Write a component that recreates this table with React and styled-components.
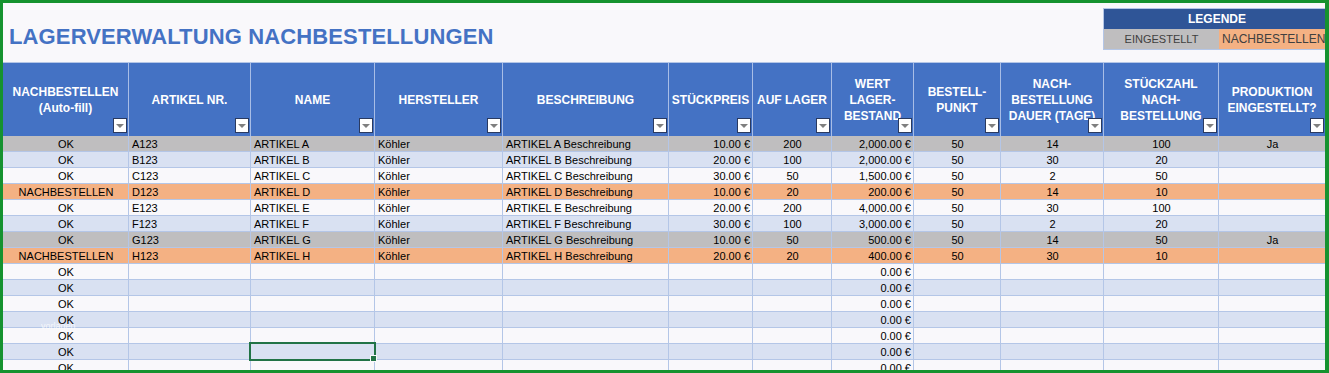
import React from 'react';
import styled, { createGlobalStyle } from 'styled-components';

const GlobalStyle = createGlobalStyle`
  body {
    margin: 0;
    background: #ffffff;
  }
`;

const Frame = styled.div`
  position: relative;
  width: 1329px;
  height: 373px;
  box-sizing: border-box;
  border: 3px solid #15922f;
  border-right-width: 4px;
  background: #f9f8fb;
  overflow: hidden;
  font-family: "Liberation Sans", Arial, sans-serif;
`;

const TitleBar = styled.div`
  display: flex;
  align-items: flex-start;
  height: 59px;
  border-bottom: 1px solid #b4c6e7;
`;

const Title = styled.h1`
  margin: 0;
  padding: 21px 0 0 6px;
  font-size: 22px;
  line-height: 26px;
  letter-spacing: 0.13px;
  font-weight: bold;
  color: #4472c4;
  white-space: nowrap;
`;

const Legend = styled.div`
  margin: 5px -4px 0 auto;
  width: 226px;
  display: grid;
  grid-template-columns: 115px 111px;
  box-sizing: border-box;
  border: 1px solid #b4c6e7;
`;

const LegendHead = styled.div`
  grid-column: 1 / -1;
  height: 20px;
  line-height: 20px;
  background: #2f5597;
  color: #fff;
  font-size: 12px;
  font-weight: bold;
  text-align: center;
`;

const LegendCell = styled.div`
  height: 20px;
  line-height: 21px;
  background: ${p => p.$bg};
  color: #404040;
  font-size: ${p => p.$size || 11}px;
  text-align: ${p => p.$align || 'center'};
  padding-left: ${p => (p.$align === 'left' ? '3px' : '0')};
  white-space: nowrap;
  overflow: hidden;
`;

const Table = styled.div`
  display: grid;
  grid-template-columns: 126px 122px 124px 128px 166px 84px 79px 82px 87px 103px 115px 106px;
`;

const HeadCell = styled.div`
  position: relative;
  height: 73px;
  box-sizing: border-box;
  display: flex;
  align-items: center;
  justify-content: center;
  text-align: center;
  background: #4472c4;
  color: #fff;
  font-size: 12px;
  font-weight: bold;
  line-height: 16px;
  border-right: ${p => (p.$last ? 'none' : '1px solid #a8bde6')};
  white-space: nowrap;
`;

const FilterButton = styled.span`
  position: absolute;
  right: 1px;
  bottom: 3px;
  width: 14px;
  height: 15px;
  box-sizing: border-box;
  background: #fff;
  border: 1px solid #2a3a60;
  display: flex;
  align-items: center;
  justify-content: center;

  &::after {
    content: "";
    border-left: 4px solid transparent;
    border-right: 4px solid transparent;
    border-top: 4px solid #7f7f7f;
    margin-top: 1px;
  }
`;

const Cell = styled.div`
  position: relative;
  height: 16px;
  box-sizing: border-box;
  padding: 1px 2px 0 3px;
  line-height: 15px;
  font-size: 11px;
  color: #000;
  background: ${p => p.$bg};
  text-align: ${p => p.$align};
  border-right: ${p => (p.$last ? 'none' : '1px solid #b4c6e7')};
  border-bottom: 1px solid #b4c6e7;
  white-space: nowrap;
  overflow: ${p => (p.$selected ? 'visible' : 'hidden')};

  ${p =>
    p.$selected &&
    `
    &::after {
      content: "";
      position: absolute;
      left: -2px;
      top: -2px;
      right: -2px;
      bottom: -2px;
      border: 2px solid #217346;
      z-index: 2;
    }
    &::before {
      content: "";
      position: absolute;
      right: -3px;
      bottom: -3px;
      width: 5px;
      height: 5px;
      background: #217346;
      border: 1px solid #f9f8fb;
      z-index: 3;
    }
  `}
`;

const Watermark = styled.span`
  position: absolute;
  left: 38px;
  top: 318px;
  font-size: 9px;
  color: rgba(255, 255, 255, 0.75);
  pointer-events: none;
`;

const COLORS = {
  gray: '#bfbebf',
  orange: '#f4b183',
  blue: '#d9e1f2',
  white: '#f9f8fb',
};

const columns = [
  { key: 'status', label: <>NACHBESTELLEN<br />(Auto-fill)</>, align: 'center' },
  { key: 'nr', label: 'ARTIKEL NR.', align: 'left' },
  { key: 'name', label: 'NAME', align: 'left' },
  { key: 'maker', label: 'HERSTELLER', align: 'left' },
  { key: 'desc', label: 'BESCHREIBUNG', align: 'left' },
  { key: 'price', label: 'STÜCKPREIS', align: 'right' },
  { key: 'stock', label: 'AUF LAGER', align: 'center' },
  { key: 'value', label: <>WERT<br />LAGER-<br />BESTAND</>, align: 'right' },
  { key: 'point', label: <>BESTELL-<br />PUNKT</>, align: 'center' },
  { key: 'days', label: <>NACH-<br />BESTELLUNG<br />DAUER (TAGE)</>, align: 'center' },
  { key: 'qty', label: <>STÜCKZAHL<br />NACH-<br />BESTELLUNG</>, align: 'center' },
  { key: 'stop', label: <>PRODUKTION<br />EINGESTELLT?</>, align: 'center' },
];

const item = (letter, status, price, stock, value, days, qty, stop = '') => ({
  status,
  nr: `${letter}123`,
  name: `ARTIKEL ${letter}`,
  maker: 'Köhler',
  desc: `ARTIKEL ${letter} Beschreibung`,
  price: `${price} €`,
  stock,
  value: `${value} €`,
  point: '50',
  days,
  qty,
  stop,
});

const items = [
  item('A', 'OK', '10.00', '200', '2,000.00', '14', '100', 'Ja'),
  item('B', 'OK', '20.00', '100', '2,000.00', '30', '20'),
  item('C', 'OK', '30.00', '50', '1,500.00', '2', '50'),
  item('D', 'NACHBESTELLEN', '10.00', '20', '200.00', '14', '10'),
  item('E', 'OK', '20.00', '200', '4,000.00', '30', '100'),
  item('F', 'OK', '30.00', '100', '3,000.00', '2', '20'),
  item('G', 'OK', '10.00', '50', '500.00', '14', '50', 'Ja'),
  item('H', 'NACHBESTELLEN', '20.00', '20', '400.00', '30', '10'),
];

const emptyRows = Array.from({ length: 8 }, () => ({ status: 'OK', value: '0.00 €' }));
const rows = [...items, ...emptyRows];

const rowColor = (row, i) => {
  if (row.stop === 'Ja') return COLORS.gray;
  if (row.status === 'NACHBESTELLEN') return COLORS.orange;
  return i % 2 === 1 ? COLORS.blue : COLORS.white;
};

const App = () => {
  return (
    <>
      <GlobalStyle />
      <Frame>
        <TitleBar>
          <Title>LAGERVERWALTUNG NACHBESTELLUNGEN</Title>
          <Legend>
            <LegendHead>LEGENDE</LegendHead>
            <LegendCell $bg={COLORS.gray}>EINGESTELLT</LegendCell>
            <LegendCell $bg={COLORS.orange} $size={12} $align="left">NACHBESTELLEN</LegendCell>
          </Legend>
        </TitleBar>
        <Table>
          {columns.map((col, c) => (
            <HeadCell key={col.key} $last={c === columns.length - 1}>
              <span>{col.label}</span>
              <FilterButton />
            </HeadCell>
          ))}
          {rows.map((row, i) =>
            columns.map((col, c) => (
              <Cell
                key={`${i}-${col.key}`}
                $bg={rowColor(row, i)}
                $align={col.align}
                $last={c === columns.length - 1}
                $selected={i === 13 && col.key === 'name'}
              >
                {row[col.key] || ''}
              </Cell>
            ))
          )}
        </Table>
        <Watermark>vorlagen</Watermark>
      </Frame>
    </>
  );
};

export default App;
